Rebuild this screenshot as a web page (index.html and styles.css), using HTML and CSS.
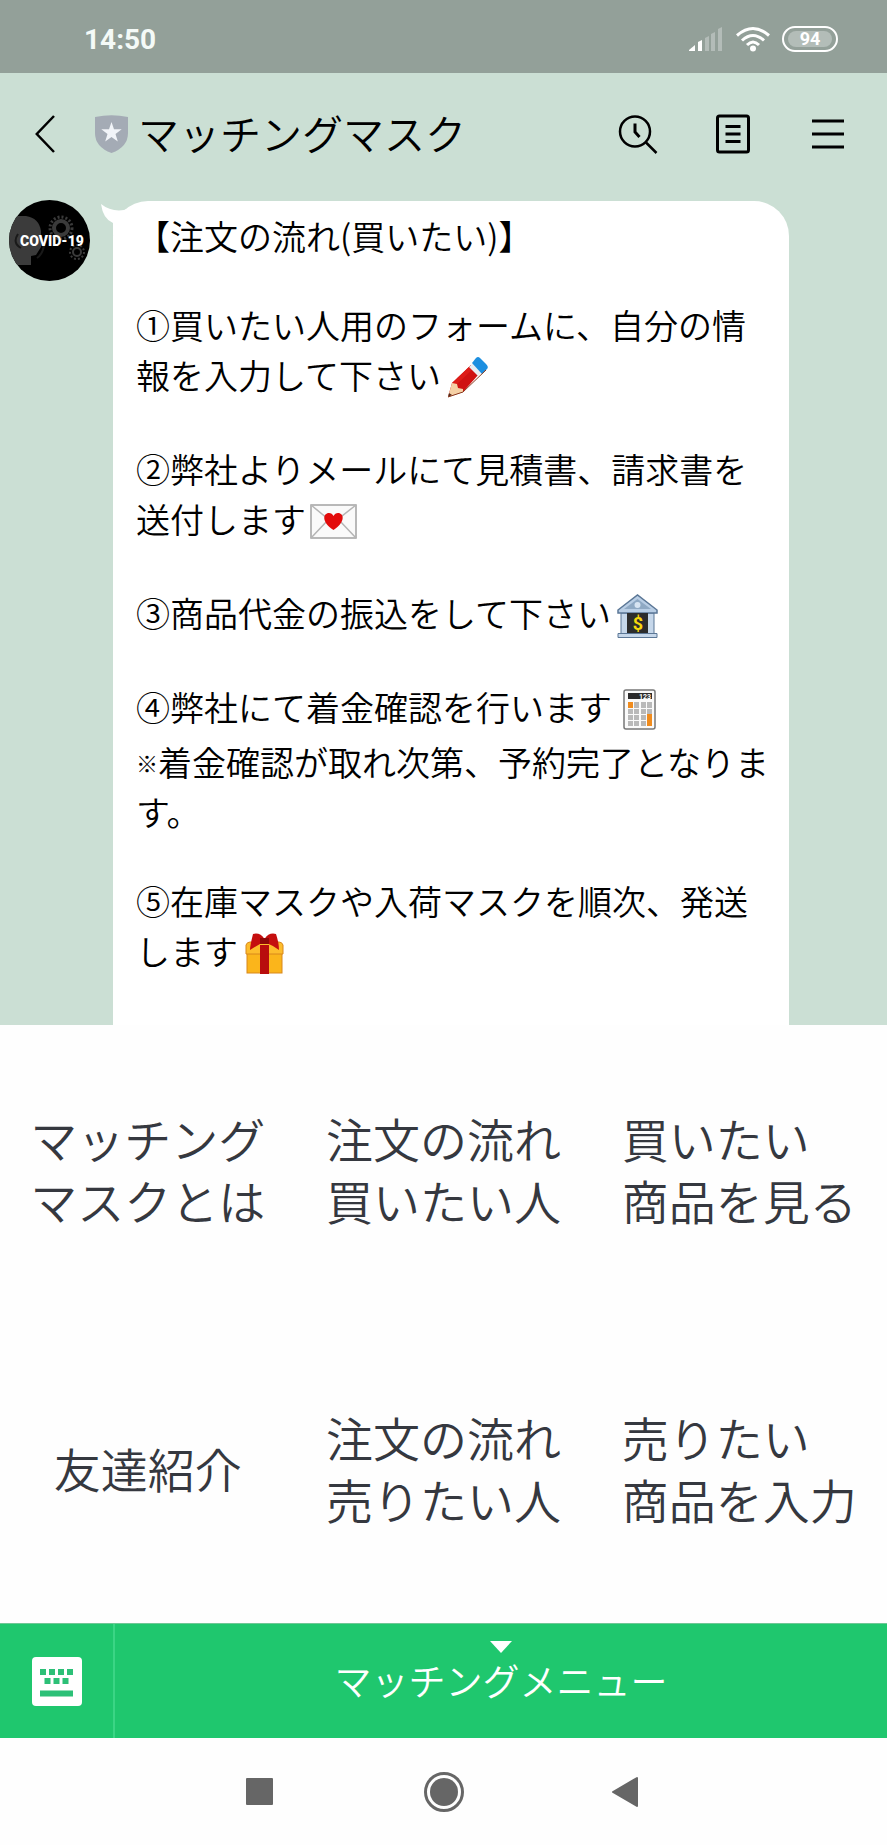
FILE: index.html
```
<!DOCTYPE html>
<html lang="ja">
<head>
  <meta charset="UTF-8" />
  <meta name="viewport" content="width=device-width, initial-scale=1" />
  <title>マッチングマスク</title>
  <link rel="stylesheet" href="styles.css">
</head>
<body>

  <div class="status-bar">
    <span class="time">14:50</span>
    <div class="status-icons">
      <svg width="36" height="26" viewBox="0 0 36 26" fill="#fff">
        <path d="M1 25v-1l6-5v6z" />
        <path d="M10 25v-9l4-2v11z" />
        <g opacity="0.3">
          <path d="M17 25V12l4-2v15z" />
          <path d="M23 25V8l4-2v19z" />
          <path d="M30 25V3l4-2v24z" />
        </g>
      </svg>
      <svg width="36" height="26" viewBox="0 0 36 26" fill="none" stroke="#fff" stroke-width="3">
        <path d="M2 9.500Q18-4.500 34 9.500" />
        <path d="M7 14.500Q18 4.500 29 14.500" />
        <path d="M12 19Q18 13 24 19" />
        <circle cx="18" cy="22.500" r="3" fill="#fff" stroke="none" />
      </svg>
      <span class="battery"><span class="battery-level">94</span></span>
    </div>
  </div>

  <header>
    <button class="icon-btn" aria-label="戻る">
      <svg width="20" height="38" viewBox="0 0 20 38" fill="none" stroke="#000" stroke-width="2.500">
        <path d="M19 1L1.800 19L19 37" />
      </svg>
    </button>
    <svg class="badge" width="33" height="38" viewBox="0 0 33 38">
      <path d="M0 2Q16.500-1.500 33 2V18Q33 32 16.500 38Q0 32 0 18Z" fill="#a4abb5" />
      <path d="M16.500 7l2.500 7.300h7.700l-6.200 4.700 2.300 7.400-6.300-4.500-6.300 4.500 2.300-7.400-6.200-4.700H14z" fill="#f1f4f8" />
    </svg>
    <h1>マッチングマスク</h1>
    <div class="header-actions">
      <button class="icon-btn" aria-label="検索">
        <svg width="40" height="40" viewBox="0 0 40 40" fill="none" stroke="#000" stroke-width="2.500">
          <circle cx="17" cy="17.500" r="15" />
          <path d="M28 28.500L38.500 39" />
          <path d="M17 9.500V18l4.500 5" stroke-width="3" />
        </svg>
      </button>
      <button class="icon-btn" aria-label="ノート">
        <svg width="40" height="40" viewBox="0 0 40 40" fill="none" stroke="#000" stroke-width="3">
          <rect x="4.500" y="2" width="31" height="36" rx="2" />
          <path d="M12.500 12.500h15M12.500 20h15M12.500 27.500h15" />
        </svg>
      </button>
      <button class="icon-btn" aria-label="メニュー">
        <svg width="40" height="40" viewBox="0 0 40 40" fill="none" stroke="#000" stroke-width="3">
          <path d="M4 7h32M4 20h32M4 33h32" />
        </svg>
      </button>
    </div>
  </header>

  <main class="chat">
    <svg class="avatar" width="81" height="82" viewBox="0 0 81 82">
      <defs>
        <clipPath id="avatar-clip"><circle cx="40.500" cy="41.500" r="40.500" /></clipPath>
      </defs>
      <g clip-path="url(#avatar-clip)">
        <rect width="81" height="82" fill="#000" />
        <path d="M0 17h17q13 2 15 15v16l-5 8-5 1v9H0z" fill="#3b3b3b" />
        <g fill="none" stroke="#3a3a3a">
          <circle cx="52" cy="29" r="7" stroke-width="4" />
          <circle cx="52" cy="29" r="11" stroke-width="3" stroke-dasharray="2 2" />
          <circle cx="68" cy="53" r="4" stroke-width="2" />
          <circle cx="68" cy="53" r="7" stroke-width="2" stroke-dasharray="2 2" />
          <path d="M9 35q-6 9 3 14M35 44q0 10-7 15" stroke="#191919" stroke-width="2" />
        </g>
        <text x="43" y="47" class="avatar-text" text-anchor="middle">COVID-19</text>
      </g>
    </svg>

    <div class="bubble">
      <svg class="tail" width="40" height="34" viewBox="0 0 40 34" fill="#fff">
        <path d="M1 3Q11 11 24 9L36 4V34H13V22Q3 18 1 3Z" />
      </svg>
      <p>【注文の流れ(買いたい)】</p>
      <p>①買いたい人用のフォームに、自分の情報を入力して下さい<svg class="emoji" width="54" height="49" viewBox="0 0 54 49">
        <path d="M7 41l4-14L30 9 38 18 22 36z" fill="#cf1212" />
        <path d="M11 27L30 9l3 3-19 18z" fill="#dd1c18" />
        <path d="M7 41l4-14 5 1 1 4 5 1v3z" fill="#f5d0a5" />
        <path d="M7 41l1-4 3 2z" fill="#53291b" />
        <path d="M28 11l4-4 9 9-4 4z" fill="#e9eef2" />
        <path d="M31 7l4-5q2-2 4 0l6 6q3 3 1 5l-5 5z" fill="#1d8fe0" />
        <path d="M7 41l15-5L45 14" fill="none" stroke="#8a3b20" stroke-width="1" />
      </svg></p>
      <p>②弊社よりメールにて見積書、請求書を送付します<svg class="emoji" width="54" height="49" viewBox="0 0 54 49">
        <rect x="5" y="5" width="45" height="33" fill="#fafafa" stroke="#a2a2a2" stroke-width="1.500" />
        <path d="M5 5l22 18L50 5M5 38l17-18M50 38L33 20" fill="none" stroke="#b5b5b5" stroke-width="1.500" />
        <path d="M27.500 30C15 22 17 13 23 13q3 0 4.500 3Q29 13 32 13c6 0 8 9-4.500 17z" fill="#e30b0b" />
      </svg></p>
      <p>③商品代金の振込をして下さい<svg class="emoji" width="54" height="49" viewBox="0 0 54 49">
        <path d="M10 19h33v21H10z" fill="#c6d7ea" stroke="#5b7796" />
        <path d="M7 16L26.500 1 46 16v3H7z" fill="#b9cee5" stroke="#5b7796" stroke-width="1.500" />
        <path d="M13 15L26.500 5 40 15z" fill="#8fa9c4" />
        <circle cx="26.500" cy="11" r="3" fill="#d7e4f2" />
        <rect x="16" y="19" width="21" height="21" fill="#2c2c2c" />
        <path d="M7 39.500h39v4H7z" fill="#c6d7ea" stroke="#5b7796" />
        <text x="27" y="36" class="bank-sign" text-anchor="middle">$</text>
      </svg></p>
      <p>④弊社にて着金確認を行います<svg class="emoji" width="54" height="49" viewBox="0 0 54 49">
        <rect x="12" y="2" width="31" height="39" rx="2" fill="#fafafa" stroke="#777" stroke-width="1.500" />
        <rect x="16" y="5" width="24" height="6" fill="#2b2b2b" />
        <text x="39" y="11" class="calc-digits" text-anchor="end">123</text>
        <path d="M22 14h5v6h-5zM29 14h5v6h-5zM35 14h5v6h-5zM16 21h5v5h-5zM22 21h5v5h-5zM29 21h5v5h-5zM35 21h5v5h-5zM16 27h5v5h-5zM22 27h5v5h-5zM29 27h5v5h-5zM16 33h5v5h-5zM22 33h5v5h-5zM29 33h5v5h-5z" fill="#b9b9b9" />
        <path d="M16 14h5v6h-5zM35 26h5v12h-5z" fill="#f08c1e" />
      </svg><br><span class="kome">※</span>着金確認が取れ次第、予約完了となります。</p>
      <p>⑤在庫マスクや入荷マスクを順次、発送します<svg class="emoji" width="54" height="49" viewBox="0 0 54 49">
        <rect x="9" y="19" width="35" height="22" fill="#fbb51b" stroke="#d8881d" />
        <path d="M8 13q1-3 4-3h29q3 0 4 3v9H8z" fill="#fdbd2c" stroke="#d8881d" />
        <path d="M22 13h9v29h-9z" fill="#b80d0d" />
        <path d="M26.500 7Q22 0 15 2q-3 12-3 16 9-6 14.500-8Q34 13 41 18q0-7-3-16-7-2-11.500 5z" fill="#c50f0f" />
        <path d="M22 6h9v6h-9z" fill="#8f0808" />
      </svg></p>
    </div>
  </main>

  <nav class="rich-menu">
    <a href="#"><span>マッチング<br>マスクとは</span></a>
    <a href="#"><span>注文の流れ<br>買いたい人</span></a>
    <a href="#"><span>買いたい<br>商品を見る</span></a>
    <a href="#"><span>友達紹介</span></a>
    <a href="#"><span>注文の流れ<br>売りたい人</span></a>
    <a href="#"><span>売りたい<br>商品を入力</span></a>
  </nav>

  <div class="menu-bar">
    <button class="keyboard-btn" aria-label="キーボード">
      <svg width="50" height="49" viewBox="0 0 50 49">
        <rect width="50" height="49" rx="4" fill="#fff" />
        <path d="M8 12h6v6H8zM17 12h6v6h-6zM26 12h6v6h-6zM35 12h6v6h-6zM12.500 21h6v6h-6zM21.500 21h6v6h-6zM30.500 21h6v6h-6zM8 33.500h33v6H8z" fill="#2cc077" />
      </svg>
    </button>
    <button class="menu-toggle">
      <svg width="22" height="12" viewBox="0 0 22 12"><path d="M0 0h22L11 12z" fill="#fff" /></svg>
      <span>マッチングメニュー</span>
    </button>
  </div>

  <div class="android-nav">
    <button class="icon-btn" aria-label="アプリ履歴">
      <svg width="40" height="40" viewBox="0 0 40 40" fill="#666"><rect x="6" y="6" width="27" height="27" rx="1" /></svg>
    </button>
    <button class="icon-btn" aria-label="ホーム">
      <svg width="40" height="40" viewBox="0 0 40 40">
        <circle cx="20" cy="20" r="18.500" fill="none" stroke="#666" stroke-width="3" />
        <circle cx="20" cy="20" r="14" fill="#666" />
      </svg>
    </button>
    <button class="icon-btn" aria-label="戻る">
      <svg width="40" height="40" viewBox="0 0 40 40" fill="#666" stroke="#666" stroke-width="2" stroke-linejoin="round">
        <path d="M5 20L29 6V34z" />
      </svg>
    </button>
  </div>

</body>
</html>
```
FILE: styles.css
```
* {
  box-sizing: border-box;
}

body {
  font-family: "Noto Sans CJK JP", sans-serif;
  font-weight: 350;
  margin: 0;
  min-height: 100vh;
  display: flex;
  flex-direction: column;
  color: #000;
  background-color: #fefefe;
}

svg {
  flex-shrink: 0;
}

button {
  font-family: inherit;
  font-weight: inherit;
  padding: 0;
  border: none;
  background: none;
  color: inherit;
  cursor: pointer;
}

.icon-btn {
  display: flex;
}

/* status bar */
.status-bar {
  display: flex;
  align-items: center;
  justify-content: space-between;
  height: 73px;
  padding: 5px 49px 0 84px;
  background-color: #93a099;
  color: #fff;
  font-family: Roboto, sans-serif;
}

.time {
  font-size: 28px;
  font-weight: 700;
  color: #f4faf7;
}

.status-icons {
  display: flex;
  align-items: center;
  gap: 11px;
}

.battery {
  width: 56px;
  height: 26px;
  padding: 3px 4px;
  border: 2px solid #fff;
  border-radius: 13px;
}

.battery-level {
  display: block;
  border-radius: 8px;
  background-color: #b3bdb8;
  font-size: 18px;
  font-weight: 700;
  line-height: 16px;
  text-align: center;
}

/* header */
header {
  display: flex;
  align-items: center;
  height: 122px;
  padding: 0 39px 0 35px;
  background-color: #cbdfd4;
}

.badge {
  margin-left: 40px;
}

h1 {
  flex: 1;
  margin: 0 0 0 10px;
  padding-bottom: 4px;
  font-size: 41px;
  font-weight: inherit;
  line-height: 60px;
}

.header-actions {
  display: flex;
  gap: 55px;
}

/* chat */
.chat {
  display: flex;
  align-items: flex-start;
  gap: 23px;
  padding: 4px 98px 0 9px;
  background-color: #cbdfd4;
}

.avatar-text {
  font-family: Roboto, sans-serif;
  font-size: 14px;
  font-weight: 900;
  fill: #fff;
}

.bubble {
  position: relative;
  flex: 1;
  margin-top: 2px;
  padding: 10px 16px 44px 23px;
  border-radius: 35px 35px 0 0;
  background-color: #fff;
  font-size: 34px;
  line-height: 50px;
}

.bubble p {
  margin: 0 0 39px;
}

.bubble p:last-child {
  margin-bottom: 0;
}

.tail {
  position: absolute;
  top: 0;
  left: -13px;
}

.emoji {
  vertical-align: -16px;
}

.bank-sign {
  font: 700 18px Roboto, sans-serif;
  fill: #f7d80c;
}

.calc-digits {
  font: 700 7px Roboto, sans-serif;
  fill: #fff;
}

.kome {
  font-size: 22px;
  line-height: 22px;
  vertical-align: 4px;
}

/* rich menu */
.rich-menu {
  flex: 1;
  display: grid;
  grid-template-columns: repeat(3, 1fr);
  grid-auto-rows: 1fr;
}

.rich-menu a {
  display: flex;
  align-items: center;
  justify-content: center;
  min-height: 200px;
  padding-bottom: 12px;
  color: #35383f;
  font-size: 47px;
  line-height: 62px;
  text-decoration: none;
}

.menu-bar {
  display: flex;
  height: 115px;
  border-top: 1px solid #6fc796;
  background-color: #1fc76e;
  color: #fff;
}

.keyboard-btn {
  display: flex;
  align-items: center;
  justify-content: center;
  width: 115px;
  border-right: 2px solid #3bd585;
}

.menu-toggle {
  flex: 1;
  display: flex;
  flex-direction: column;
  align-items: center;
  padding-top: 17px;
  font-size: 37px;
  line-height: 54px;
}

/* android buttons */
.android-nav {
  display: flex;
  align-items: center;
  justify-content: center;
  gap: 144px;
  height: 107px;
}
```
